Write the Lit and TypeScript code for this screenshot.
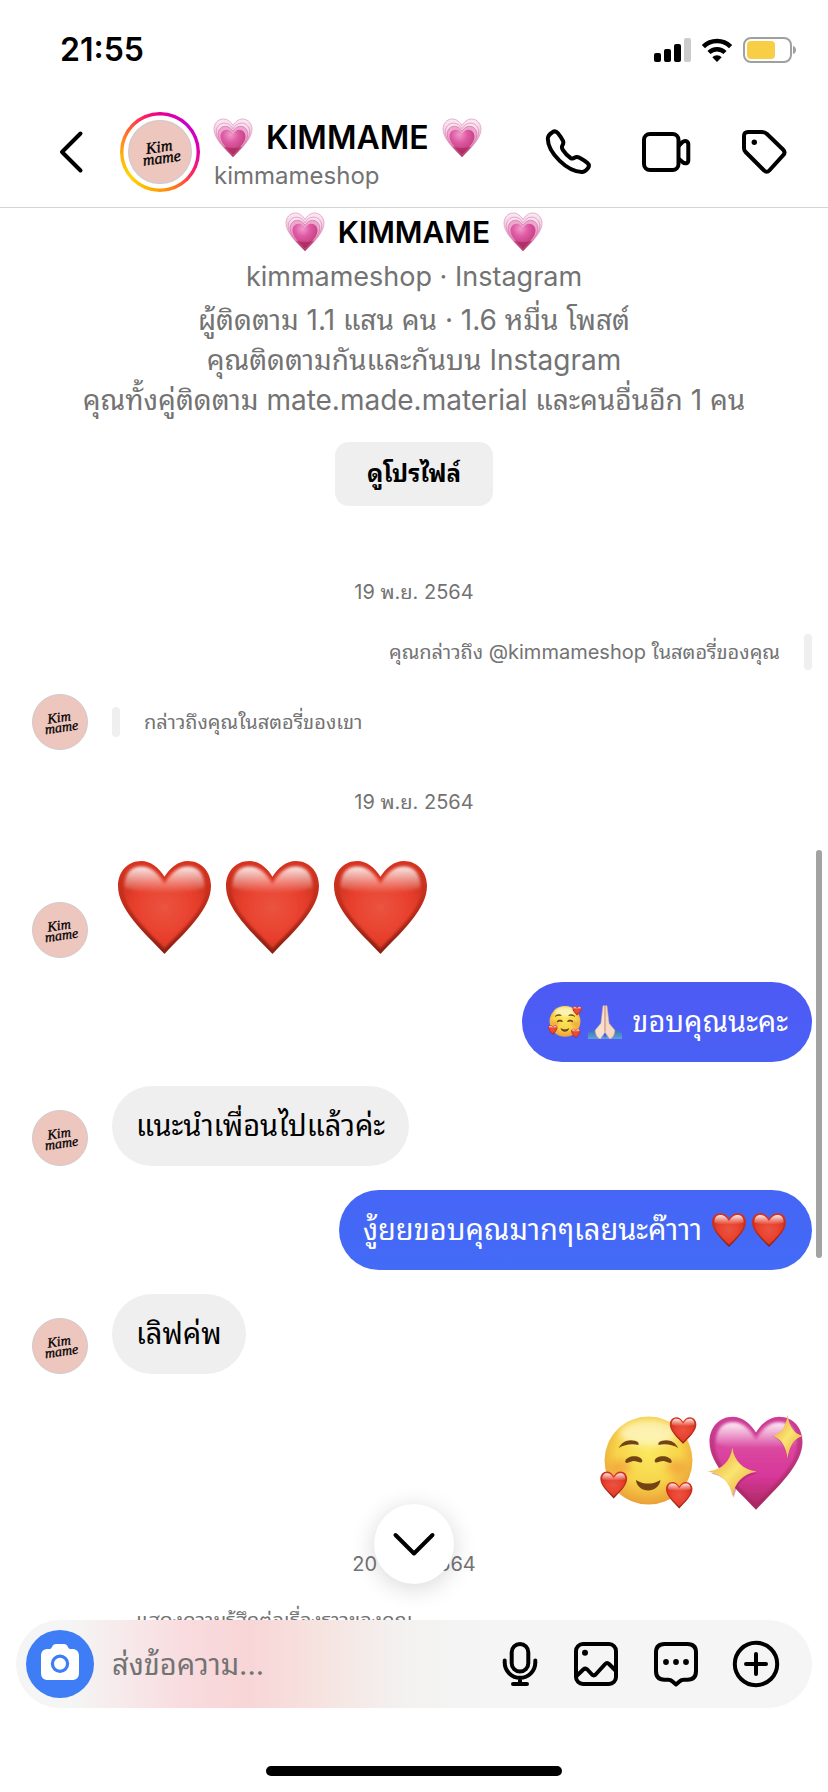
import { LitElement, html, svg, css, nothing } from "lit";
import { customElement, property } from "lit/decorators.js";
import { classMap } from "lit/directives/class-map.js";

type EmojiName = "red-heart" | "growing-heart" | "loved-face" | "sparkling-heart" | "folded-hands";

const HEART =
  "M50 17C44 7 35 0 25 0C10 0 0 12 0 27C0 52 27 76 50 100C73 76 100 52 100 27C100 12 90 0 75 0C65 0 56 7 50 17Z";

const EMOJI_LABELS: Record<EmojiName, string> = {
  "red-heart": "❤️",
  "growing-heart": "💗",
  "loved-face": "🥰",
  "sparkling-heart": "💖",
  "folded-hands": "🙏🏻",
};

@customElement("chat-emoji")
export class ChatEmoji extends LitElement {
  @property() name: EmojiName = "red-heart";

  static styles = css`
    :host {
      display: inline-block;
      flex: none;
    }
    svg {
      display: block;
      width: 100%;
      height: 100%;
      overflow: visible;
    }
  `;

  private redHeart() {
    return svg`
      <path d=${HEART} fill="url(#red-edge)" />
      <g clip-path="url(#heart-clip)">
        <path d=${HEART} transform="translate(6 6) scale(.88)" fill="url(#red-body)" filter="url(#soft)" />
        <path d="M7 28C7 13 14 6 25 6C36 6 43 13 50 25C57 13 64 6 75 6C86 6 93 13 93 28C80 36 20 36 7 28Z" fill="url(#gloss)" filter="url(#soft)" />
      </g>`;
  }

  private growingHeart() {
    return svg`
      <path d=${HEART} fill="url(#pale)" stroke="#dc9cc2" stroke-width="2" />
      <path d=${HEART} transform="translate(6 11) scale(.88)" fill="url(#pale)" stroke="#d884b2" stroke-width="2" />
      <path d=${HEART} transform="translate(11 19) scale(.78)" fill="#eda6cd" stroke="#cf5f9d" stroke-width="2" />
      <path d=${HEART} transform="translate(17 28) scale(.66)" fill="url(#rose)" />
      <path d="M50 100L26 73Q50 80 74 73Z" fill="#a92657" opacity=".65" filter="url(#soft)" />`;
  }

  private lovedFace() {
    return svg`
      <circle cx="150" cy="137" r="136" fill="url(#face)" />
      <ellipse cx="150" cy="52" rx="90" ry="40" fill="#fffbd8" opacity=".7" filter="url(#blur)" />
      <ellipse cx="64" cy="158" rx="30" ry="24" fill="#ef8335" opacity=".45" filter="url(#blur)" />
      <ellipse cx="236" cy="158" rx="30" ry="24" fill="#ef8335" opacity=".45" filter="url(#blur)" />
      <g fill="#734413">
        <path d="M58 98C68 78 88 70 108 76C118 79 121 84 119 89C98 84 76 88 58 98Z" />
        <path d="M242 98C232 78 212 70 192 76C182 79 179 84 181 89C202 84 224 88 242 98Z" />
        <path d="M78 141C80 119 130 118 131 139C128 149 112 135 100 139C90 142 80 148 78 141Z" />
        <path d="M222 141C220 119 170 118 169 139C172 149 188 135 200 139C210 142 220 148 222 141Z" />
        <path d="M111 197C134 212 164 212 187 197C182 240 116 240 111 197Z" />
      </g>
      <g transform="translate(216 3) scale(.82)">${this.redHeart()}</g>
      <g transform="translate(1 171) scale(.83)">${this.redHeart()}</g>
      <g transform="translate(204 203) scale(.82)">${this.redHeart()}</g>`;
  }

  private sparklingHeart() {
    return svg`
      <g transform="translate(5 5) scale(2.8)">
        <path d=${HEART} fill="url(#magenta-edge)" />
        <g clip-path="url(#heart-clip)">
          <path d=${HEART} transform="translate(6 6) scale(.88)" fill="url(#magenta)" filter="url(#soft)" />
          <path d="M7 28C7 13 14 6 25 6C36 6 43 13 50 25C57 13 64 6 75 6C86 6 93 13 93 28C80 36 20 36 7 28Z" fill="url(#gloss)" filter="url(#soft)" />
        </g>
      </g>
      <path d="M78 106Q86 166 148 176Q88 190 78 250Q68 188 10 176Q68 166 78 106Z" fill="#9d1d66" opacity=".4" filter="url(#soft)" />
      <path d="M74 98Q84 162 147 170Q84 182 74 246Q64 182 0 170Q64 162 74 98Z" fill="url(#gold)" />
      <path d="M240 0Q247 56 286 64Q248 76 240 133Q232 76 192 64Q234 56 240 0Z" fill="#9d1d66" opacity=".4" filter="url(#soft)" />
      <path d="M240 0Q248 56 287 63Q248 72 240 131Q232 72 193 63Q232 56 240 0Z" fill="url(#gold)" />`;
  }

  private foldedHands() {
    return svg`
      <path d="M0 82L32 66L52 100H0Z" fill="url(#sleeve)" />
      <path d="M100 82L68 66L48 100H100Z" fill="url(#sleeve)" />
      <path d="M44 3C47 0 50 2 50 6V80L36 100Q22 94 21 74L38 54Z" fill="#f8e0d0" stroke="#d9a98e" stroke-width="1.5" />
      <path d="M56 3C53 0 50 2 50 6V80L64 100Q78 94 79 74L62 54Z" fill="#f5d8c6" stroke="#d9a98e" stroke-width="1.5" />
      <path d="M50 4V78" stroke="#c98f72" stroke-width="2.5" fill="none" />`;
  }

  private body() {
    switch (this.name) {
      case "growing-heart":
        return this.growingHeart();
      case "loved-face":
        return this.lovedFace();
      case "sparkling-heart":
        return this.sparklingHeart();
      case "folded-hands":
        return this.foldedHands();
      default:
        return this.redHeart();
    }
  }

  private box() {
    if (this.name === "loved-face") return "0 0 300 286";
    if (this.name === "sparkling-heart") return "0 0 287 286";
    return "0 0 100 100";
  }

  render() {
    return html`<svg viewBox=${this.box()} role="img" aria-label=${EMOJI_LABELS[this.name]}>
      <defs>
        <clipPath id="heart-clip"><path d=${HEART} /></clipPath>
        <filter id="soft" x="-20%" y="-20%" width="140%" height="140%"><feGaussianBlur stdDeviation="1.6" /></filter>
        <filter id="blur" x="-50%" y="-50%" width="200%" height="200%"><feGaussianBlur stdDeviation="11" /></filter>
        <linearGradient id="red-edge" x2="0" y2="1">
          <stop offset="0" stop-color="#d8321f" /><stop offset=".5" stop-color="#bd2d1c" /><stop offset="1" stop-color="#8c1f12" />
        </linearGradient>
        <radialGradient id="red-body" cx=".5" cy=".5" r=".6">
          <stop offset="0" stop-color="#ea5440" /><stop offset=".6" stop-color="#e8402d" /><stop offset="1" stop-color="#cf3220" />
        </radialGradient>
        <linearGradient id="gloss" x2="0" y2="1">
          <stop offset="0" stop-color="#fff" stop-opacity=".9" /><stop offset="1" stop-color="#fff" stop-opacity="0" />
        </linearGradient>
        <linearGradient id="pale" x2="0" y2="1">
          <stop offset="0" stop-color="#fbeaf3" /><stop offset=".6" stop-color="#efb2d3" /><stop offset="1" stop-color="#b63570" />
        </linearGradient>
        <radialGradient id="rose" cx=".4" cy=".2" r=".9">
          <stop offset="0" stop-color="#f09bca" /><stop offset=".35" stop-color="#de5aa5" /><stop offset="1" stop-color="#b02e66" />
        </radialGradient>
        <radialGradient id="face" cx=".5" cy=".4" r=".6">
          <stop offset="0" stop-color="#fbe95f" /><stop offset=".6" stop-color="#f7d54a" /><stop offset="1" stop-color="#eb9f37" />
        </radialGradient>
        <linearGradient id="magenta-edge" x2="0" y2="1">
          <stop offset="0" stop-color="#cf3d98" /><stop offset="1" stop-color="#a82860" />
        </linearGradient>
        <linearGradient id="magenta" x2="0" y2="1">
          <stop offset="0" stop-color="#dc55a6" /><stop offset=".65" stop-color="#d8389a" /><stop offset="1" stop-color="#b02a66" />
        </linearGradient>
        <linearGradient id="gold" x2="1" y2="1">
          <stop offset="0" stop-color="#e8962f" /><stop offset=".5" stop-color="#fae572" /><stop offset="1" stop-color="#e89a34" />
        </linearGradient>
        <linearGradient id="sleeve" x2="0" y2="1">
          <stop offset="0" stop-color="#2f6aa8" /><stop offset="1" stop-color="#5f9fd8" />
        </linearGradient>
      </defs>
      ${this.body()}
    </svg>`;
  }
}

@customElement("shop-avatar")
export class ShopAvatar extends LitElement {
  static styles = css`
    :host {
      display: block;
      flex: none;
    }
    svg {
      display: block;
      width: 100%;
      height: 100%;
    }
    .word {
      font: italic 400 14px "Liberation Serif", serif;
      fill: #000;
      stroke: #000;
      stroke-width: 0.3;
    }
  `;

  render() {
    return html`<svg viewBox="0 0 56 56" role="img" aria-label="Kim Mame">
      <circle cx="28" cy="28" r="27.5" fill="#edc6be" stroke="#cfcaca" />
      <g transform="rotate(-8 28 28)">
        <text class="word" x="16" y="28">Kim</text>
        <text class="word" x="12" y="38">mame</text>
      </g>
    </svg>`;
  }
}

type Message =
  | { kind: "date"; text: string }
  | { kind: "mention"; mine: boolean; text: string }
  | { kind: "stickers"; mine: boolean; emoji: EmojiName[] }
  | { kind: "text"; mine: boolean; text: string; tone?: string; before?: EmojiName[]; after?: EmojiName[] }
  | { kind: "reaction"; text: string };

const MESSAGES: Message[] = [
  { kind: "date", text: "19 พ.ย. 2564" },
  { kind: "mention", mine: true, text: "คุณกล่าวถึง @kimmameshop ในสตอรี่ของคุณ" },
  { kind: "mention", mine: false, text: "กล่าวถึงคุณในสตอรี่ของเขา" },
  { kind: "date", text: "19 พ.ย. 2564" },
  { kind: "stickers", mine: false, emoji: ["red-heart", "red-heart", "red-heart"] },
  { kind: "text", mine: true, text: "ขอบคุณนะคะ", tone: "indigo", before: ["loved-face", "folded-hands"] },
  { kind: "text", mine: false, text: "แนะนำเพื่อนไปแล้วค่ะ" },
  { kind: "text", mine: true, text: "งู้ยยขอบคุณมากๆเลยนะค๊าาา", tone: "blue", after: ["red-heart", "red-heart"] },
  { kind: "text", mine: false, text: "เลิฟค่พ" },
  { kind: "stickers", mine: true, emoji: ["loved-face", "sparkling-heart"] },
  { kind: "date", text: "20 พ.ย. 2564" },
  { kind: "reaction", text: "แสดงความรู้สึกต่อเรื่องราวของคุณ" },
];

@customElement("app-root")
export class AppRoot extends LitElement {
  static styles = css`
    :host {
      display: flex;
      flex-direction: column;
      height: 100vh;
      overflow: hidden;
      background: #fff;
      color: #000;
      font-family: Inter, "Noto Sans Thai Looped", Loma, Garuda, Waree, "Noto Sans", sans-serif;
    }
    * {
      box-sizing: border-box;
      margin: 0;
    }
    button {
      padding: 0;
      border: 0;
      background: none;
      color: inherit;
      font: inherit;
      display: block;
      flex: none;
    }
    svg {
      display: block;
    }
    .line {
      fill: none;
      stroke: currentColor;
      stroke-width: 4;
      stroke-linecap: round;
      stroke-linejoin: round;
    }

    .status {
      flex: none;
      display: flex;
      align-items: center;
      justify-content: space-between;
      height: 98px;
      padding: 2px 32px 0 60px;
    }
    .clock {
      font-size: 32px;
      line-height: 40px;
      font-weight: 600;
    }
    .signals {
      display: flex;
      align-items: center;
      gap: 10px;
    }

    .bar {
      flex: none;
      display: flex;
      align-items: center;
      height: 110px;
      padding: 0 40px 1px 48px;
      border-bottom: 1px solid #d4d4d4;
    }
    .back {
      margin-right: 24px;
    }
    .ring {
      flex: none;
      width: 80px;
      height: 80px;
      padding: 8px;
      border-radius: 50%;
      background:
        radial-gradient(closest-side, #fff 36px, transparent 37px),
        conic-gradient(from 0deg, #e6008e, #c800d0 12%, #e000a8 25%, #ff2a5a 35%, #ff7a1a 44%, #ffa800 52%, #ffd400 64%, #ffae10 74%, #ff6a2a 84%, #ff1f60 93%, #e6008e);
    }
    .ring shop-avatar {
      width: 64px;
      height: 64px;
    }
    .who {
      flex: 1;
      min-width: 0;
      padding: 8px 0 0 14px;
      color: inherit;
      text-decoration: none;
    }
    .title {
      display: flex;
      align-items: center;
      gap: 14px;
      font-size: 32px;
      line-height: 40px;
      font-weight: 600;
    }
    .title chat-emoji {
      width: 38px;
      height: 38px;
    }
    .handle {
      font-size: 24px;
      line-height: 36px;
      color: #737373;
    }
    .actions {
      display: flex;
      gap: 49px;
    }

    .thread {
      position: relative;
      flex: 1;
      min-height: 0;
      overflow: hidden;
    }
    .profile {
      display: flex;
      flex-direction: column;
      align-items: center;
      padding: 2px 24px 0;
      text-align: center;
      font-size: 28px;
      line-height: 40px;
      color: #737373;
    }
    .profile .title {
      font-size: 30px;
      line-height: 44px;
      color: #000;
    }
    .profile .account {
      font-size: 27px;
      line-height: 46px;
    }
    .view {
      margin-top: 22px;
      padding: 0 32px;
      height: 64px;
      border-radius: 14px;
      background: #efefef;
      color: #000;
      font-size: 24px;
      font-weight: 700;
    }

    .messages {
      display: flex;
      flex-direction: column;
      gap: 24px;
      padding: 58px 16px 0 32px;
    }
    .date {
      margin: 16px 0 6px;
      font-size: 20px;
      line-height: 24px;
      text-align: center;
      color: #737373;
      padding-right: 16px;
    }
    .row {
      display: flex;
      align-items: flex-end;
      gap: 24px;
    }
    .row.mine {
      justify-content: flex-end;
    }
    .row shop-avatar {
      width: 56px;
      height: 56px;
    }
    .mention {
      display: flex;
      align-items: center;
      align-self: center;
      gap: 24px;
      font-size: 20px;
      line-height: 36px;
      color: #737373;
    }
    .mark {
      width: 8px;
      height: 36px;
      border-radius: 4px;
      background: #efefef;
    }
    .mark.short {
      height: 30px;
    }
    .stickers {
      display: flex;
      gap: 15px;
      padding: 17px 6px 4px;
    }
    .stickers chat-emoji {
      width: 93px;
      height: 93px;
    }
    .mine .stickers {
      gap: 10px;
      padding: 17px 8px 2px;
    }
    .mine .stickers chat-emoji {
      width: 97px;
      height: 95px;
    }
    .bubble {
      display: flex;
      align-items: center;
      gap: 8px;
      height: 80px;
      padding: 0 24px;
      border-radius: 40px;
      background: #efefef;
      font-size: 29px;
      line-height: 40px;
    }
    .bubble.indigo {
      background: linear-gradient(#4d5af4, #4a60f5);
      color: #fff;
    }
    .bubble.blue {
      background: linear-gradient(#4565f6, #436bf6);
      color: #fff;
    }
    .inline {
      display: flex;
      gap: 6px;
      padding: 0 2px;
    }
    .inline chat-emoji {
      width: 34px;
      height: 34px;
    }
    .reaction {
      padding-left: 104px;
      font-size: 20px;
      line-height: 28px;
      color: #737373;
    }

    .thumb {
      position: absolute;
      top: 642px;
      right: 6px;
      width: 6px;
      height: 408px;
      border-radius: 3px;
      background: #a3a3a3;
    }
    .jump {
      position: absolute;
      left: 50%;
      bottom: 36px;
      width: 80px;
      height: 80px;
      margin-left: -40px;
      border-radius: 50%;
      background: #fff;
      box-shadow: 0 4px 24px rgba(0, 0, 0, 0.16);
    }

    .composer {
      flex: none;
      display: flex;
      align-items: center;
      height: 88px;
      margin: 0 16px;
      padding: 0 32px 0 10px;
      border-radius: 44px;
      background: linear-gradient(90deg, #f5f5f5 7%, #f9dcdf 21%, #f8d5d7 29%, #f6e3e0 38%, #f3f2f1 49%, #f5f5f5 60%);
    }
    .camera {
      border-radius: 50%;
      background: #3f7df6;
    }
    .field {
      flex: 1;
      min-width: 0;
      height: 64px;
      margin: 0 16px;
      padding: 0 2px;
      border: 0;
      outline: 0;
      background: none;
      font-family: inherit;
      font-size: 29px;
      line-height: 40px;
    }
    .field::placeholder {
      color: #737373;
      opacity: 1;
    }
    .tools {
      display: flex;
      gap: 32px;
    }
    .home {
      flex: none;
      display: flex;
      justify-content: center;
      height: 84px;
      padding-top: 58px;
    }
    .pill {
      width: 296px;
      height: 10px;
      border-radius: 5px;
      background: #000;
    }
  `;

  private emojis(list?: EmojiName[]) {
    return list ? html`<span class="inline">${list.map((n) => html`<chat-emoji name=${n}></chat-emoji>`)}</span>` : nothing;
  }

  private renderMessage(m: Message) {
    if (m.kind === "date") return html`<div class="date">${m.text}</div>`;
    if (m.kind === "reaction") return html`<div class="reaction">${m.text}</div>`;
    let body;
    if (m.kind === "mention") {
      body = m.mine
        ? html`<div class="mention"><span>${m.text}</span><span class="mark"></span></div>`
        : html`<div class="mention"><span class="mark short"></span><span>${m.text}</span></div>`;
    } else if (m.kind === "stickers") {
      body = html`<div class="stickers">${m.emoji.map((n) => html`<chat-emoji name=${n}></chat-emoji>`)}</div>`;
    } else {
      body = html`<div class=${classMap({ bubble: true, indigo: m.tone === "indigo", blue: m.tone === "blue" })}>
        ${this.emojis(m.before)}<span>${m.text}</span>${this.emojis(m.after)}
      </div>`;
    }
    return html`<div class=${classMap({ row: true, mine: m.mine })}>
      ${m.mine ? nothing : html`<shop-avatar></shop-avatar>`}${body}
    </div>`;
  }

  render() {
    return html`
      <div class="status">
        <time class="clock">21:55</time>
        <div class="signals">
          <svg width="37" height="24" viewBox="0 0 37 24" role="img" aria-label="Signal">
            <rect y="15" width="7" height="9" rx="2" />
            <rect x="10" y="11" width="7" height="13" rx="2" />
            <rect x="20" y="6" width="7" height="18" rx="2" />
            <rect x="30" width="7" height="24" rx="2" fill="#ccc" />
          </svg>
          <svg width="32" height="24" viewBox="0 0 32 24" role="img" aria-label="Wi-Fi">
            <path d="M2.4 8.6A19.4 19.4 0 0 1 29.6 8.6" fill="none" stroke="#000" stroke-width="4.6" />
            <path d="M8 14.5A11.4 11.4 0 0 1 24 14.5" fill="none" stroke="#000" stroke-width="4.4" />
            <path d="M16 24L11.3 19.2A6.6 6.6 0 0 1 20.7 19.2Z" />
          </svg>
          <svg width="53" height="26" viewBox="0 0 53 26" role="img" aria-label="Battery">
            <rect x="1" y="1" width="47" height="24" rx="7" fill="none" stroke="#a0a0a0" stroke-width="2" />
            <rect x="4" y="4" width="28" height="18" rx="4" fill="#f7ce45" />
            <path d="M50 9C54 10 54 16 50 17Z" fill="#a0a0a0" />
          </svg>
        </div>
      </div>

      <header class="bar">
        <button class="back" aria-label="Back">
          <svg width="48" height="48" viewBox="0 0 48 48"><path class="line" d="M32.500 5.500L14 24L32.500 42.500" /></svg>
        </button>
        <div class="ring"><shop-avatar></shop-avatar></div>
        <a class="who" href="#profile">
          <div class="title">
            <chat-emoji name="growing-heart"></chat-emoji><span>KIMMAME</span><chat-emoji name="growing-heart"></chat-emoji>
          </div>
          <div class="handle">kimmameshop</div>
        </a>
        <div class="actions">
          <button aria-label="Audio call">
            <svg width="48" height="48" viewBox="0 0 48 48">
              <path class="line" d="M8.500 4.200C10.500 2.800 12.500 3.500 14 5.300C16 7.800 17.800 10.300 19 12.800C19.800 14.800 19.300 16 18.400 17.500C17.500 19 17.900 20.500 19 22.200C21 25.400 23.700 28 26.600 30C28.200 31 29.300 30.600 30.600 29.700C32.300 28.600 34 29 36 30C38.700 31.500 41.300 33 43.500 35C45.300 36.700 45.400 38.200 44 40.200C42.500 42.300 41 43.700 38.500 43.900C24 44.500 3.800 25 3.800 10.600C3.800 8 6 5.800 8.500 4.200Z" />
            </svg>
          </button>
          <button aria-label="Video call">
            <svg width="50" height="48" viewBox="0 0 50 48">
              <rect class="line" x="3" y="6" width="34.500" height="36" rx="6" />
              <path class="line" d="M38 17.500L41.500 14C44 12 47 13 47.300 16V32.500C47 35.500 44 36.300 41.500 34L38 31" />
            </svg>
          </button>
          <button aria-label="Label">
            <svg width="48" height="48" viewBox="0 0 48 48">
              <path class="line" d="M8 4H22C24 4 25.500 4.600 27 6L43 21.500C45 23.500 45 25.300 43.200 27.200L29.300 42.500C27.600 44.300 25.800 44.300 24.100 42.500L5.600 24C4.300 22.700 4 21.500 4 20V8C4 5.400 5.400 4 8 4Z" />
              <circle cx="14.300" cy="14.300" r="2.700" />
            </svg>
          </button>
        </div>
      </header>

      <main class="thread">
        <section class="profile">
          <h1 class="title">
            <chat-emoji name="growing-heart"></chat-emoji><span>KIMMAME</span><chat-emoji name="growing-heart"></chat-emoji>
          </h1>
          <p class="account">kimmameshop · Instagram</p>
          <p>ผู้ติดตาม 1.1 แสน คน · 1.6 หมื่น โพสต์</p>
          <p>คุณติดตามกันและกันบน Instagram</p>
          <p>คุณทั้งคู่ติดตาม mate.made.material และคนอื่นอีก 1 คน</p>
          <button class="view">ดูโปรไฟล์</button>
        </section>
        <section class="messages">${MESSAGES.map((m) => this.renderMessage(m))}</section>
        <div class="thumb"></div>
        <button class="jump" aria-label="Scroll to latest">
          <svg width="80" height="80" viewBox="0 0 80 80"><path class="line" d="M21.500 31L40 49.500L58.500 31" /></svg>
        </button>
      </main>

      <form class="composer">
        <button class="camera" type="button" aria-label="Camera">
          <svg width="68" height="68" viewBox="0 0 68 68">
            <path d="M22 19H24C26 19 26 14 30 14H38C42 14 42 19 44 19H46C50.500 19 53 21.500 53 26V43C53 47.500 50.500 50 46 50H22C17.500 50 15 47.500 15 43V26C15 21.500 17.500 19 22 19Z" fill="#fff" />
            <circle cx="34" cy="33.700" r="7.600" fill="#fff" stroke="#3f7df6" stroke-width="3.200" />
          </svg>
        </button>
        <input class="field" type="text" aria-label="ส่งข้อความ" placeholder="ส่งข้อความ..." />
        <div class="tools">
          <button type="button" aria-label="Voice message">
            <svg width="44" height="48" viewBox="0 0 44 48">
              <rect class="line" x="15.700" y="4" width="16.600" height="27.500" rx="8.300" />
              <path class="line" d="M8.700 20.500V22.500A15.300 15.300 0 0 0 39.300 22.500V20.500M24 38V43.500M17 44H31" />
            </svg>
          </button>
          <button type="button" aria-label="Photo">
            <svg width="48" height="48" viewBox="0 0 48 48">
              <rect class="line" x="4" y="4" width="40" height="40" rx="7" />
              <path class="line" d="M4.500 36L11.300 29.500C12.700 28.300 14 28.300 15.300 29.500L20 34.500C21.200 35.700 22.400 35.700 23.600 34.500L33.200 24C34.400 22.700 35.800 22.700 37 24L43.500 30.500" />
              <circle cx="13" cy="12.700" r="3" />
            </svg>
          </button>
          <button type="button" aria-label="Quick replies">
            <svg width="48" height="48" viewBox="0 0 48 48">
              <path class="line" d="M12.500 4H35.500C41 4 44 7 44 12.500V31C44 36.500 41 39.700 35.500 39.700H32C30 39.700 29 40 27.500 41.500L24 44.500L20.500 41.500C19 40 18 39.700 16 39.700H12.500C7 39.700 4 36.500 4 31V12.500C4 7 7 4 12.500 4Z" />
              <circle cx="14" cy="22" r="2.900" /><circle cx="24" cy="22" r="2.900" /><circle cx="34" cy="22" r="2.900" />
            </svg>
          </button>
          <button type="button" aria-label="More">
            <svg width="48" height="48" viewBox="0 0 48 48">
              <circle class="line" cx="24" cy="24" r="21.200" />
              <path class="line" d="M24 14V34M14 24H34" />
            </svg>
          </button>
        </div>
      </form>
      <div class="home"><span class="pill"></span></div>
    `;
  }
}
